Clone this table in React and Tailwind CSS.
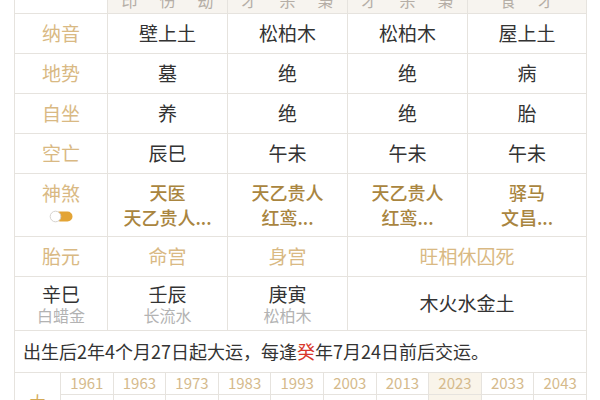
import React from "react";

const LINE = "bg-[#e6e3de]";
const cell = "bg-white flex items-center justify-center";
const lbl = "text-[#d9b983]";
const val = "text-[#333333]";

function Toggle() {
  return (
    <svg width="26" height="13" viewBox="0 0 26 13">
      <rect x="7" y="1.5" width="17.5" height="10" rx="5" fill="#e3a435" />
      <circle cx="7.5" cy="6.5" r="5.3" fill="#ffffff" stroke="#d6d3cf" strokeWidth="1" />
    </svg>
  );
}

export default function App() {
  const rows = [
    ["纳音", "壁上土", "松柏木", "松柏木", "屋上土"],
    ["地势", "墓", "绝", "绝", "病"],
    ["自坐", "养", "绝", "绝", "胎"],
    ["空亡", "辰巳", "午未", "午未", "午未"],
  ];
  const shensha = [
    ["天医", "天乙贵人..."],
    ["天乙贵人", "红鸾..."],
    ["天乙贵人", "红鸾..."],
    ["驿马", "文昌..."],
  ];
  const headers = [
    ["印", "伤", "劫"],
    ["才", "杀", "枭"],
    ["才", "杀", "枭"],
    ["食", "才"],
  ];
  const years = ["1961", "1963", "1973", "1983", "1993", "2003", "2013", "2023", "2033", "2043"];
  const ages = ["1岁", "3岁", "13岁", "23岁", "33岁", "43岁", "53岁", "63岁", "73岁", "83岁"];

  return (
    <div
      className="w-[600px] h-[400px] overflow-hidden bg-white"
      style={{ fontFamily: '"Noto Sans CJK SC", "Noto Sans", sans-serif' }}
    >
      <div
        className={`mt-[-27px] ml-[14px] w-[573px] grid grid-cols-[92px_119px_119px_119px_118px] gap-px ${LINE} border border-[#e6e3de]`}
      >
        {/* header row */}
        <div className="bg-white h-[39px]" />
        {headers.map((h, i) => (
          <div key={i} className="bg-[#f7f4ef] h-[39px] flex items-end justify-center gap-[22px] pb-[3px] text-[16px] leading-[20px] text-[#b5aea6]">
            {h.map((c, j) => (
              <span key={j}>{c}</span>
            ))}
          </div>
        ))}

        {rows.map((r, i) => (
          <React.Fragment key={i}>
            <div className={`${cell} h-[39px] text-[19px] ${lbl}`}>{r[0]}</div>
            {r.slice(1).map((v, j) => (
              <div key={j} className={`${cell} h-[39px] text-[19px] ${val}`}>{v}</div>
            ))}
          </React.Fragment>
        ))}

        {/* 神煞 */}
        <div className={`${cell} h-[62px] flex-col`}>
          <div className={`text-[19px] leading-[25px] ${lbl}`}>神煞</div>
          <div className="h-[25px] flex items-center pb-[2px]">
            <Toggle />
          </div>
        </div>
        {shensha.map((s, i) => (
          <div key={i} className={`${cell} h-[62px] flex-col text-[18px] leading-[25px] font-medium text-[#a9853f]`}>
            <div>{s[0]}</div>
            <div>{s[1]}</div>
          </div>
        ))}

        {/* 胎元 row */}
        <div className={`${cell} h-[39px] text-[19px] ${lbl}`}>胎元</div>
        <div className={`${cell} h-[39px] text-[19px] ${lbl}`}>命宫</div>
        <div className={`${cell} h-[39px] text-[19px] ${lbl}`}>身宫</div>
        <div className={`${cell} col-span-2 h-[39px] text-[19px] ${lbl}`}>旺相休囚死</div>

        {/* 辛巳 row */}
        {[
          ["辛巳", "白蜡金"],
          ["壬辰", "长流水"],
          ["庚寅", "松柏木"],
        ].map((p, i) => (
          <div key={i} className={`${cell} h-[53px] flex-col`}>
            <div className="text-[19px] leading-[23px] text-[#333333]">{p[0]}</div>
            <div className="text-[16px] leading-[21px] text-[#b3b3b3]">{p[1]}</div>
          </div>
        ))}
        <div className={`${cell} col-span-2 h-[53px] text-[19px] ${val}`}>木火水金土</div>

        {/* birth text */}
        <div className="col-span-5 bg-white h-[41px] flex items-center pl-[8px] text-[18px] text-[#333333]">
          出生后2年4个月27日起大运，每逢<span className="text-[#d9362b]">癸</span>年7月24日前后交运。
        </div>

        {/* years */}
        <div className={`col-span-5 grid grid-cols-[45px_repeat(10,minmax(0,1fr))] gap-px ${LINE}`}>
          <div className="row-span-2 bg-white flex flex-col items-center pt-[17px] text-[16px] leading-[22px] text-[#d4a955]">
            <span>大</span>
            <span>运</span>
          </div>
          {years.map((y) => (
            <div
              key={y}
              className={`h-[21px] flex items-center justify-center text-[15px] text-[#d5ba8c] ${y === "2023" ? "bg-[#f9f4ea]" : "bg-white"}`}
            >
              {y}
            </div>
          ))}
          {ages.map((a, i) => (
            <div
              key={a}
              className={`h-[40px] flex items-center justify-center text-[15px] text-[#333333] ${i === 7 ? "bg-[#f9f4ea]" : "bg-white"}`}
            >
              {a}
            </div>
          ))}
        </div>
      </div>
    </div>
  );
}
